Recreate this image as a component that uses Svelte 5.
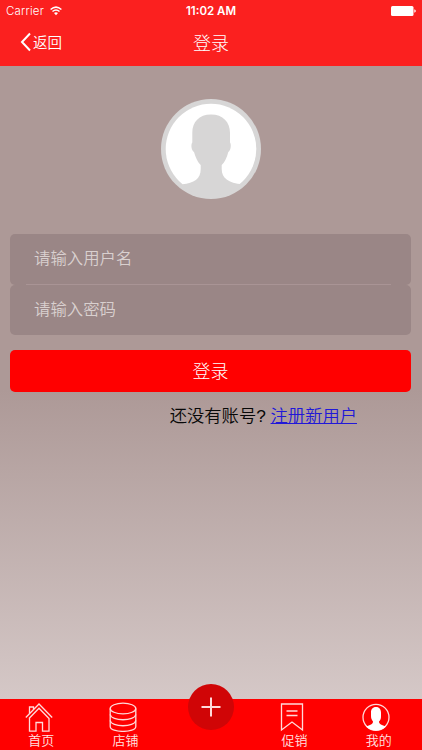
<script>
  let username = $state('');
  let password = $state('');

  const tabs = [
    { id: 'home', label: '首页' },
    { id: 'shop', label: '店铺' },
    { id: 'add', label: '' },
    { id: 'promo', label: '促销' },
    { id: 'mine', label: '我的' },
  ];
</script>

<div class="screen">
  <header>
    <div class="status">
      <div class="carrier">
        <span>Carrier</span>
        <svg width="12" height="10" viewBox="0 0 12 10" fill="none" stroke="#fff" stroke-width="1.5">
          <path d="M0.6 3.5Q6 -1.2 11.4 3.5M2.5 5.5Q6 2.6 9.5 5.5" />
          <path d="M4 7Q6 5.5 8 7L6 9.2Z" fill="#fff" stroke="none" />
        </svg>
      </div>
      <span class="time">11:02 AM</span>
      <svg class="battery" width="25" height="10" viewBox="0 0 25 10" fill="#fff">
        <rect width="22.5" height="10" rx="1.5" />
        <path d="M23.3 3.3Q24.8 3.7 24.8 5T23.3 6.7Z" />
      </svg>
    </div>
    <nav class="navbar">
      <button class="back">
        <svg width="12" height="20" viewBox="0 0 12 20" fill="none" stroke="#fff" stroke-width="2">
          <path d="M10 1.5L2 10L10 18.5" />
        </svg>
        <span>返回</span>
      </button>
      <h1>登录</h1>
      <span></span>
    </nav>
  </header>

  <main>
    <svg class="avatar" width="100" height="100" viewBox="0 0 100 100">
      <circle cx="50" cy="50" r="50" fill="#d7d6d6" />
      <circle cx="50" cy="50" r="45.3" fill="#fff" />
      <path
        fill="#d7d6d6"
        d="M50 15.500C38 15.500 31.300 23 31.300 34V43.500C29.800 45 30.200 51.500 33 53C34.500 58 36.500 63 39.700 66V70C39.700 80 33 84 21.300 85.300C29 93 39 97 50 97S72 93 81.700 85.300C67 84 60.700 79 60.700 70V66C64 63 66 58 67.300 53C70 51.500 70.400 45 69 43.500V34C69 23 62 15.500 50 15.500Z"
      />
    </svg>

    <form onsubmit={(e) => e.preventDefault()}>
      <div class="fields">
        <input type="text" placeholder="请输入用户名" bind:value={username} />
        <div class="divider"></div>
        <input type="password" placeholder="请输入密码" bind:value={password} />
      </div>
      <button class="submit">登录</button>
    </form>

    <p class="register">还没有账号? <a href="#register">注册新用户</a></p>
  </main>

  <footer>
    {#each tabs as tab (tab.id)}
      <div class="tab">
        {#if tab.id === 'home'}
          <svg width="28" height="30" viewBox="0 0 28 30">
            <path d="M0.800 15.500L14 2L27.200 15.500M4.500 16V29.200H11V20.500H17.500V29.200H24V16M4 16.500L14 6.200L24 16.500M4.500 11.500V5H8.500V7.500" />
          </svg>
        {:else if tab.id === 'shop'}
          <svg width="28" height="30" viewBox="0 0 28 30">
            <ellipse cx="14" cy="6.500" rx="12.800" ry="5.300" />
            <path d="M1.200 6.500V24.500C1.200 31 26.800 31 26.800 24.500V6.500" />
            <path d="M1.200 12.500C2 19.500 26 19.500 26.800 12.500M1.200 18.500C2 25.500 26 25.500 26.800 18.500" />
          </svg>
        {:else if tab.id === 'add'}
          <button class="add" aria-label="添加">
            <svg width="20" height="20" viewBox="0 0 20 20">
              <path d="M0.500 10H19.500M10 0.500V19.500" />
            </svg>
          </button>
        {:else if tab.id === 'promo'}
          <svg width="28" height="30" viewBox="0 0 28 30">
            <path d="M3.500 2H24.500V28L14 20L3.500 28Z" />
            <path d="M8.500 9H19.500M8.500 13.500H19.500" />
          </svg>
        {:else}
          <svg width="28" height="30" viewBox="0 0 28 30">
            <circle cx="14" cy="15.300" r="13" />
            <path class="solid" d="M14 5C10.500 5 8.800 7.500 9 10.500V14C9 17 10 18 11 19.500C11 22.500 8 23 4 24.500Q8 28.500 14 28.500T24 24.500C20 23 17 22.500 17 19.500C18.500 18 19 17 19 14V10.500C19 7.500 17.500 5 14 5Z" />
          </svg>
        {/if}
        {#if tab.label}
          <span>{tab.label}</span>
        {/if}
      </div>
    {/each}
  </footer>
</div>

<style>
  .screen {
    width: 422px;
    height: 750px;
    display: flex;
    flex-direction: column;
    overflow: hidden;
    font-family: 'Liberation Sans', 'Noto Sans CJK SC', sans-serif;
    font-weight: 350;
    background: linear-gradient(#ad9997 0, #ad9997 390px, #d5c8c7 700px);
  }

  button {
    border: none;
    padding: 0;
    color: #fff;
    background: none;
    font: inherit;
  }

  header {
    height: 66px;
    flex: none;
    color: #fff;
    background: #fb201f;
  }

  .status,
  .navbar {
    display: grid;
    grid-template-columns: 1fr auto 1fr;
    align-items: center;
  }

  .status {
    height: 22px;
    padding: 0 6px;
    font-family: Inter, sans-serif;
    font-size: 11.5px;
  }

  .carrier {
    display: flex;
    align-items: center;
    gap: 6px;
    letter-spacing: 0.2px;
  }

  .time {
    font-weight: 600;
    font-size: 11.5px;
  }

  .battery {
    justify-self: end;
  }

  .navbar {
    height: 39px;
    padding: 0 20px;
  }

  .back {
    display: flex;
    align-items: center;
    gap: 1px;
    font-size: 14.5px;
  }

  h1 {
    margin: 0;
    font-size: 18px;
    font-weight: 300;
  }

  main {
    flex: 1;
    display: flex;
    flex-direction: column;
    padding: 33px 11px 0 10px;
  }

  .avatar {
    align-self: center;
    flex: none;
    margin-left: 1px;
  }

  form {
    margin-top: 35px;
  }

  input {
    display: block;
    box-sizing: border-box;
    width: 100%;
    height: 50.5px;
    padding: 0 24px 1px;
    border: none;
    border-radius: 5px;
    outline: none;
    background: #9a8686;
    color: #fff;
    font: inherit;
    font-size: 16.4px;
  }

  input::placeholder {
    color: #d9d0cf;
    opacity: 1;
  }

  .divider {
    height: 1px;
    margin: -0.5px 20px -0.5px 16px;
    background: #a99495;
    position: relative;
  }

  .submit {
    width: 100%;
    height: 42px;
    margin-top: 15px;
    padding-bottom: 2px;
    border-radius: 5px;
    background: #f00;
    font-size: 18px;
    font-weight: 300;
  }

  .register {
    margin: 11px 54px 0 0;
    text-align: right;
    font-size: 17.3px;
    line-height: 26px;
    color: #080808;
  }

  .register a {
    color: #2118d8;
    text-underline-offset: 1px;
    text-decoration-thickness: 1px;
  }

  footer {
    height: 51px;
    flex: none;
    display: grid;
    grid-template-columns: repeat(5, 1fr);
    background: #f00;
  }

  .tab {
    display: flex;
    flex-direction: column;
    align-items: center;
    padding-top: 3px;
    color: #ffe3e3;
    font-size: 13px;
    line-height: 18px;
  }

  .tab > svg {
    flex: none;
    margin-right: 7px;
  }

  .tab > span {
    margin-right: 2px;
  }

  .tab svg {
    fill: none;
    stroke: #ffdada;
    stroke-width: 1.3;
  }

  .tab .solid {
    fill: #fff;
    stroke: none;
  }

  .add {
    width: 46px;
    height: 46px;
    flex: none;
    display: grid;
    place-items: center;
    margin-top: -18px;
    border-radius: 50%;
    background: #d00506;
  }

  .add svg {
    stroke-width: 2;
  }
</style>
